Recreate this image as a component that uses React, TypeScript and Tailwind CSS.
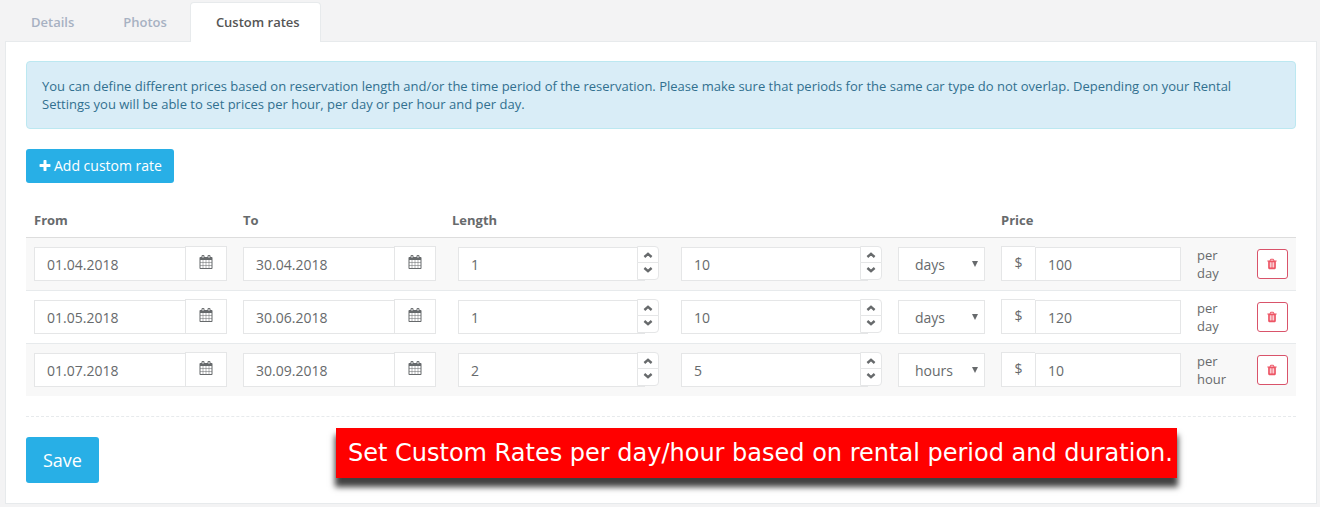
import { useState } from "react";
import type { ReactNode } from "react";

type Rate = {
  id: number;
  from: string;
  to: string;
  min: string;
  max: string;
  unit: "days" | "hours";
  price: string;
};

const initialRates: Rate[] = [
  { id: 1, from: "01.04.2018", to: "30.04.2018", min: "1", max: "10", unit: "days", price: "100" },
  { id: 2, from: "01.05.2018", to: "30.06.2018", min: "1", max: "10", unit: "days", price: "120" },
  { id: 3, from: "01.07.2018", to: "30.09.2018", min: "2", max: "5", unit: "hours", price: "10" },
];

const inputClass =
  "h-[34px] min-w-0 border border-[#e5e6e7] bg-white px-3 text-sm text-[#676a6c] outline-none focus:border-[#28afe6]";

function Icon({ className, children }: { className: string; children: ReactNode }) {
  return (
    <svg viewBox="0 0 1792 1792" fill="currentColor" aria-hidden="true" className={className}>
      {children}
    </svg>
  );
}

function CalendarIcon() {
  return (
    <Icon className="h-[14px] w-[14px]">
      <path d="M192 1664h288v-288h-288v288zm352 0h320v-288h-320v288zm-352-352h288v-320h-288v320zm352 0h320v-320h-320v320zm-352-384h288v-288h-288v288zm736 736h320v-288h-320v288zm-384-736h320v-288h-320v288zm768 736h288v-288h-288v288zm-384-352h320v-320h-320v320zm-352-864v-288q0-13-9.5-22.5t-22.5-9.5h-64q-13 0-22.5 9.5t-9.5 22.5v288q0 13 9.5 22.5t22.5 9.5h64q13 0 22.5-9.5t9.5-22.5zm736 864h288v-320h-288v320zm-384-384h320v-288h-320v288zm384 0h288v-288h-288v288zm32-480v-288q0-13-9.5-22.5t-22.5-9.5h-64q-13 0-22.5 9.5t-9.5 22.5v288q0 13 9.5 22.5t22.5 9.5h64q13 0 22.5-9.5t9.5-22.5zm384-64v1280q0 52-38 90t-90 38h-1408q-52 0-90-38t-38-90v-1280q0-52 38-90t90-38h128v-96q0-66 47-113t113-47h64q66 0 113 47t47 113v96h384v-96q0-66 47-113t113-47h64q66 0 113 47t47 113v96h128q52 0 90 38t38 90z" />
      <path d="M128 352h1536v224H128z" />
    </Icon>
  );
}

function TrashIcon() {
  return (
    <Icon className="h-3 w-3">
      <path d="M704 1376v-704q0-14-9-23t-23-9h-64q-14 0-23 9t-9 23v704q0 14 9 23t23 9h64q14 0 23-9t9-23zm256 0v-704q0-14-9-23t-23-9h-64q-14 0-23 9t-9 23v704q0 14 9 23t23 9h64q14 0 23-9t9-23zm256 0v-704q0-14-9-23t-23-9h-64q-14 0-23 9t-9 23v704q0 14 9 23t23 9h64q14 0 23-9t9-23zm-544-992h448l-48-117q-7-9-17-11h-317q-10 2-17 11zm928 32v64q0 14-9 23t-23 9h-96v948q0 83-47 143.5t-113 60.5h-832q-66 0-113-58.5t-47-141.5v-952h-96q-14 0-23-9t-9-23v-64q0-14 9-23t23-9h309l70-167q15-37 54-63t79-26h320q40 0 79 26t54 63l70 167h309q14 0 23 9t9 23z" />
    </Icon>
  );
}

function PlusIcon() {
  return (
    <Icon className="h-[14px] w-[14px]">
      <path d="M1600 736v192q0 40-28 68t-68 28h-416v416q0 40-28 68t-68 28h-192q-40 0-68-28t-28-68v-416h-416q-40 0-68-28t-28-68v-192q0-40 28-68t68-28h416v-416q0-40 28-68t68-28h192q40 0 68 28t28 68v416h416q40 0 68 28t28 68z" />
    </Icon>
  );
}

function Chevron({ down = false }: { down?: boolean }) {
  return (
    <svg viewBox="0 0 10 6" fill="none" stroke="currentColor" strokeWidth="2.4" aria-hidden="true" className="h-[6px] w-[10px]">
      <path d={down ? "M1.4 1l3.6 3.1L8.6 1" : "M1.4 5l3.6-3.1L8.6 5"} />
    </svg>
  );
}

function DateField({ label, value, onChange }: { label: string; value: string; onChange: (v: string) => void }) {
  return (
    <div className="flex items-end">
      <input aria-label={label} value={value} onChange={(e) => onChange(e.target.value)} className={`${inputClass} flex-1 border-r-0`} />
      <button type="button" aria-label={`Pick ${label}`} className="flex h-[35px] w-[42px] items-center justify-center border border-[#e5e6e7] bg-white pb-[3px]">
        <CalendarIcon />
      </button>
    </div>
  );
}

function Spinner({ label, value, onChange }: { label: string; value: string; onChange: (v: string) => void }) {
  const step = (by: number) => onChange(String(Math.max(0, Number(value) + by)));
  return (
    <div className="flex h-[35px] items-start pl-[6px]">
      <input aria-label={label} value={value} onChange={(e) => onChange(e.target.value)} className={`${inputClass} flex-1 self-end`} />
      <div className="relative -ml-2 flex w-[22px] flex-col">
        <button type="button" aria-label={`Increase ${label}`} onClick={() => step(1)} className="flex h-[17px] items-center justify-center rounded-tr border border-[#e5e6e7] bg-white">
          <Chevron />
        </button>
        <button type="button" aria-label={`Decrease ${label}`} onClick={() => step(-1)} className="-mt-px flex h-[18px] items-center justify-center rounded-br border border-[#e5e6e7] bg-white pb-[2px]">
          <Chevron down />
        </button>
      </div>
    </div>
  );
}

export default function App() {
  const [rates, setRates] = useState(initialRates);

  const update = (id: number, patch: Partial<Rate>) =>
    setRates((list) => list.map((r) => (r.id === id ? { ...r, ...patch } : r)));

  const addRate = () =>
    setRates((list) => [...list, { id: Date.now(), from: "", to: "", min: "1", max: "1", unit: "days", price: "" }]);

  return (
    <div className="min-h-screen bg-[#f3f3f4] pt-[2px] pr-[3px] pb-[3px] pl-[5px] font-['Open_Sans',sans-serif] text-[13px] leading-[18px] text-[#676a6c]">
      <nav className="flex font-semibold">
        {["Details", "Photos"].map((tab) => (
          <a key={tab} href="#" className="mr-[2px] border border-b-0 border-transparent pt-[10px] pr-5 pb-[10px] pl-[25px] text-[#a7b1c2]">
            {tab}
          </a>
        ))}
        <a href="#" aria-current="page" className="relative -mb-px rounded-t border border-b-0 border-[#e7eaec] bg-white pt-[10px] pr-5 pb-[11px] pl-[25px] text-[#555]">
          Custom rates
        </a>
      </nav>

      <main className="border border-[#e7eaec] bg-white p-5 pt-[19px]">
        <p className="rounded border border-[#bce8f1] bg-[#d9edf7] p-[15px] text-[#31708f]">
          You can define different prices based on reservation length and/or the time period of the reservation. Please make sure that
          periods for the same car type do not overlap. Depending on your Rental Settings you will be able to set prices per hour, per day
          or per hour and per day.
        </p>

        <button type="button" onClick={addRate} className="mt-5 flex h-[34px] items-center gap-[2px] rounded-[3px] bg-[#28afe6] px-3 text-sm font-medium text-white">
          <PlusIcon />
          Add custom rate
        </button>

        <table className="mt-5 w-full table-fixed border-collapse">
          <colgroup>
            <col className="w-[209px]" />
            <col className="w-[209px]" />
            <col />
            <col />
            <col className="w-[103px]" />
            <col className="w-[196px]" />
            <col className="w-[60px]" />
            <col className="w-[47px]" />
          </colgroup>
          <thead>
            <tr className="text-left">
              <th className="p-2 font-bold">From</th>
              <th className="p-2 font-bold">To</th>
              <th className="p-2 font-bold" colSpan={3}>Length</th>
              <th className="p-2 font-bold" colSpan={3}>Price</th>
            </tr>
          </thead>
          <tbody>
            {rates.map((rate) => (
              <tr key={rate.id} className="border-t border-[#e7eaec] align-top first:border-[#ddd] odd:bg-[#f8f8f8]">
                <td className="p-2">
                  <DateField label="From date" value={rate.from} onChange={(from) => update(rate.id, { from })} />
                </td>
                <td className="p-2">
                  <DateField label="To date" value={rate.to} onChange={(to) => update(rate.id, { to })} />
                </td>
                <td className="p-2">
                  <Spinner label="Minimum length" value={rate.min} onChange={(min) => update(rate.id, { min })} />
                </td>
                <td className="p-2">
                  <Spinner label="Maximum length" value={rate.max} onChange={(max) => update(rate.id, { max })} />
                </td>
                <td className="p-2">
                  <div className="relative flex h-[35px] items-end">
                    <select
                      aria-label="Length unit"
                      value={rate.unit}
                      onChange={(e) => update(rate.id, { unit: e.target.value as Rate["unit"] })}
                      className="h-[34px] w-full appearance-none border border-[#e5e6e7] bg-white pt-[2px] pl-4 text-sm outline-none"
                    >
                      <option value="days">days</option>
                      <option value="hours">hours</option>
                    </select>
                    <svg viewBox="0 0 6 6" fill="currentColor" aria-hidden="true" className="pointer-events-none absolute top-[15px] right-[7px] h-[6px] w-[6px]">
                      <path d="M0 0h6L3 6z" />
                    </svg>
                  </div>
                </td>
                <td className="p-2">
                  <div className="flex items-end">
                    <span className="flex h-[35px] w-[34px] items-center justify-center border border-r-0 border-[#e5e6e7] bg-white pb-px text-sm">$</span>
                    <input aria-label="Price" value={rate.price} onChange={(e) => update(rate.id, { price: e.target.value })} className={`${inputClass} flex-1`} />
                  </div>
                </td>
                <td className="p-2">{rate.unit === "days" ? "per day" : "per hour"}</td>
                <td className="p-2 align-middle">
                  <button
                    type="button"
                    aria-label="Delete rate"
                    onClick={() => setRates((list) => list.filter((r) => r.id !== rate.id))}
                    className="flex h-[30px] w-[31px] items-center justify-center rounded-[3px] border border-[#d9536a] bg-white text-[#ed5565]"
                  >
                    <TrashIcon />
                  </button>
                </td>
              </tr>
            ))}
          </tbody>
        </table>

        <hr className="my-5 border-t border-dashed border-[#e7eaec]" />

        <div className="relative">
          <button type="button" className="block h-[46px] rounded-[3px] bg-[#28afe6] px-[17px] text-lg font-medium text-white">
            Save
          </button>
          <div className="absolute -top-[9px] left-[310px] flex h-[50px] items-center bg-[#f00] pr-1 pl-3 font-['DejaVu_Sans',sans-serif] text-2xl whitespace-nowrap text-white shadow-[0_8px_6px_1px_rgba(0,0,0,0.75)]">
            Set Custom Rates per day/hour based on rental period and duration.
          </div>
        </div>
      </main>
    </div>
  );
}
